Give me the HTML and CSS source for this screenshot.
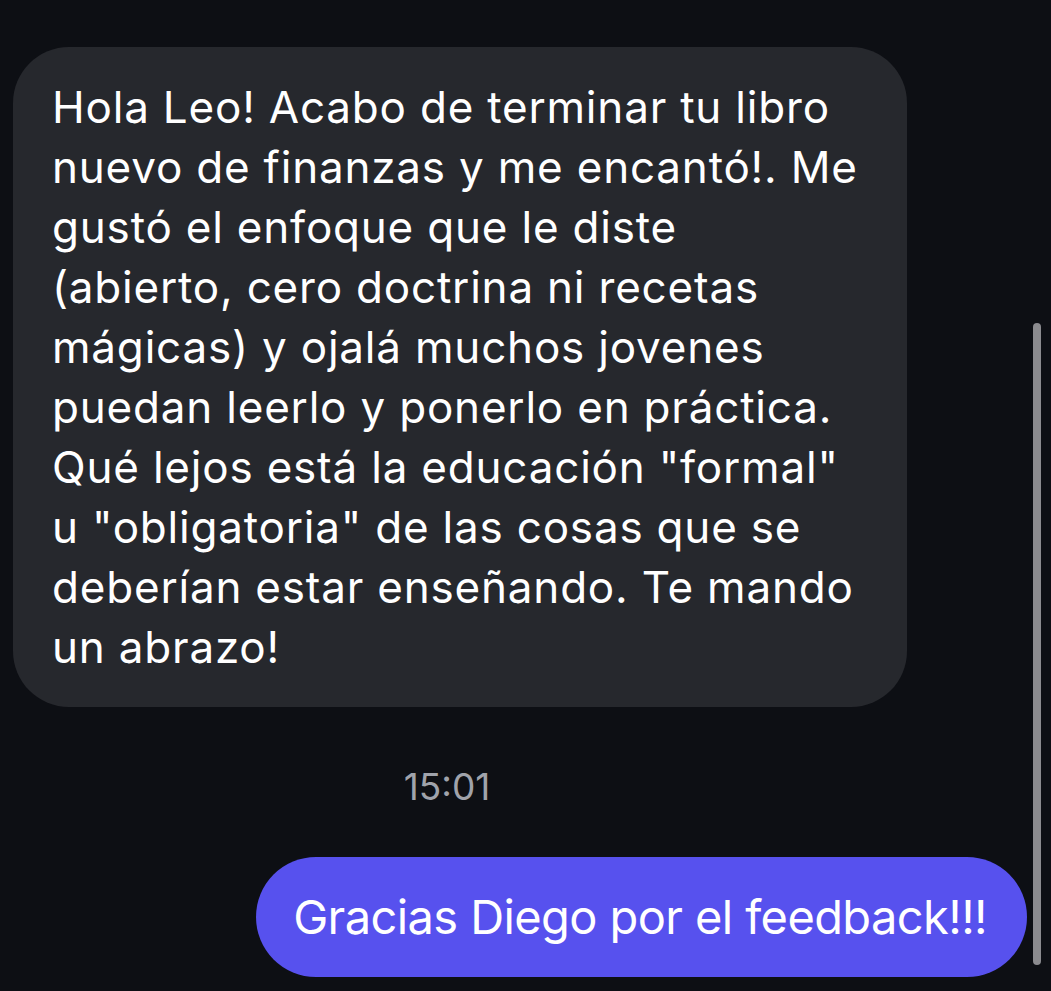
FILE: index.html
```html
<!DOCTYPE html>
<html lang="es">
<head>
    <meta charset="UTF-8">
    <meta name="viewport" content="width=device-width, initial-scale=1.0">
    <title>Chat</title>
    <link rel="stylesheet" href="styles.css">
</head>
<body>
    <div class="chat">
        <div class="bubble incoming">
            Hola Leo! Acabo de terminar tu libro<br>
            nuevo de finanzas y me encantó!. Me<br>
            gustó el enfoque que le diste<br>
            (abierto, cero doctrina ni recetas<br>
            mágicas) y ojalá muchos jovenes<br>
            puedan leerlo y ponerlo en práctica.<br>
            Qué lejos está la educación "formal"<br>
            u "obligatoria" de las cosas que se<br>
            deberían estar enseñando. Te mando<br>
            un abrazo!
        </div>

        <div class="timestamp">15:01</div>

        <div class="row-out">
            <div class="bubble outgoing">Gracias Diego por el feedback!!!</div>
        </div>
    </div>

    <div class="scrollbar"></div>
</body>
</html>
```

FILE: styles.css
```css
html, body {
    margin: 0;
    height: 100%;
}
body {
    background: #0d0f14;
    color: #ffffff;
    font-family: Inter, "Noto Sans", sans-serif;
    overflow: hidden;
    position: relative;
}
.chat {
    padding-top: 47px;
    display: flex;
    flex-direction: column;
}
.bubble {
    line-height: 60px;
    white-space: nowrap;
}
.incoming {
    margin-left: 13px;
    width: 894px;
    box-sizing: border-box;
    padding: 30px 20px 30px 39px;
    background: #26282d;
    border-radius: 56px;
    font-size: 44px;
    letter-spacing: 0.8px;
}
.timestamp {
    width: 894px;
    text-align: center;
    margin-top: 62px;
    font-size: 37px;
    line-height: 36px;
    color: #a0a3ab;
}
.row-out {
    display: flex;
    justify-content: flex-end;
    margin-top: 52px;
    padding-right: 24px;
}
.outgoing {
    background: #5751ee;
    height: 120px;
    box-sizing: border-box;
    padding: 30px 40px 30px 37px;
    border-radius: 60px;
    font-size: 47px;
    letter-spacing: -0.6px;
}
.scrollbar {
    position: absolute;
    left: 1033px;
    top: 323px;
    width: 8px;
    height: 642px;
    border-radius: 4px;
    background: #8b8b8f;
}
```
